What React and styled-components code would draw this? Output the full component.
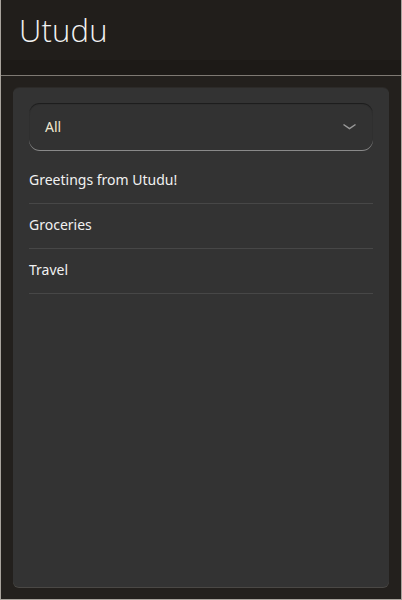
import React from "react";
import styled, { createGlobalStyle } from "styled-components";

const GlobalStyle = createGlobalStyle`
  html, body {
    margin: 0;
    padding: 0;
    background: #a8a39c;
  }
  body {
    font-family: "Noto Sans", "Open Sans", sans-serif;
  }
`;

const Window = styled.div`
  box-sizing: border-box;
  margin: 0 1px;
  width: 400px;
  height: 599px;
  background: #23201d;
  display: flex;
  flex-direction: column;
`;

const Header = styled.header`
  height: 60px;
  background: #211e1b;
  display: flex;
  align-items: center;
  padding-left: 18px;
`;

const Title = styled.h1`
  margin: 0;
  font-family: "Open Sans", sans-serif;
  font-weight: 300;
  font-size: 31px;
  color: #f2f2f2;
  letter-spacing: 0.2px;
`;

const Band = styled.div`
  height: 15px;
  background: #1d1a17;
  border-bottom: 1px solid #7e7973;
`;

const Body = styled.main`
  flex: 1;
  display: flex;
  padding: 12px;
`;

const Card = styled.section`
  flex: 1;
  background: #333333;
  border-radius: 6px;
  box-shadow: 0 1px 0 #4a4845, 0 -1px 0 #2c2a28;
  padding: 15px 16px;
  display: flex;
  flex-direction: column;
`;

const Select = styled.div`
  height: 47px;
  border-radius: 11px;
  background: #323232;
  box-shadow: inset 0 1px 1px #1b1b1b, 0 1px 0 #8a8a8a;
  display: flex;
  align-items: center;
  justify-content: space-between;
  padding: 0 16px 0 16px;
  margin-bottom: 9px;
`;

const SelectLabel = styled.span`
  font-size: 14px;
  color: #f0e7cf;
`;

const List = styled.ul`
  list-style: none;
  margin: 0;
  padding: 0;
`;

const Item = styled.li`
  box-sizing: border-box;
  height: 45px;
  padding-bottom: 3px;
  display: flex;
  align-items: center;
  font-size: 14px;
  color: #f1f1f1;
  border-bottom: 1px solid #474747;
`;

const Chevron = () => (
  <svg width="15" height="8" viewBox="0 0 15 8">
    <path d="M1.5 1.5 L7.5 5.5 L13.5 1.5" fill="none" stroke="#9a9a9a" strokeWidth="1.5" />
  </svg>
);

const items = ["Greetings from Utudu!", "Groceries", "Travel"];

const App = () => {
  return (
    <>
      <GlobalStyle />
      <Window>
        <Header>
          <Title>Utudu</Title>
        </Header>
        <Band />
        <Body>
          <Card>
            <Select>
              <SelectLabel>All</SelectLabel>
              <Chevron />
            </Select>
            <List>
              {items.map((item) => (
                <Item key={item}>{item}</Item>
              ))}
            </List>
          </Card>
        </Body>
      </Window>
    </>
  );
};

export default App;
